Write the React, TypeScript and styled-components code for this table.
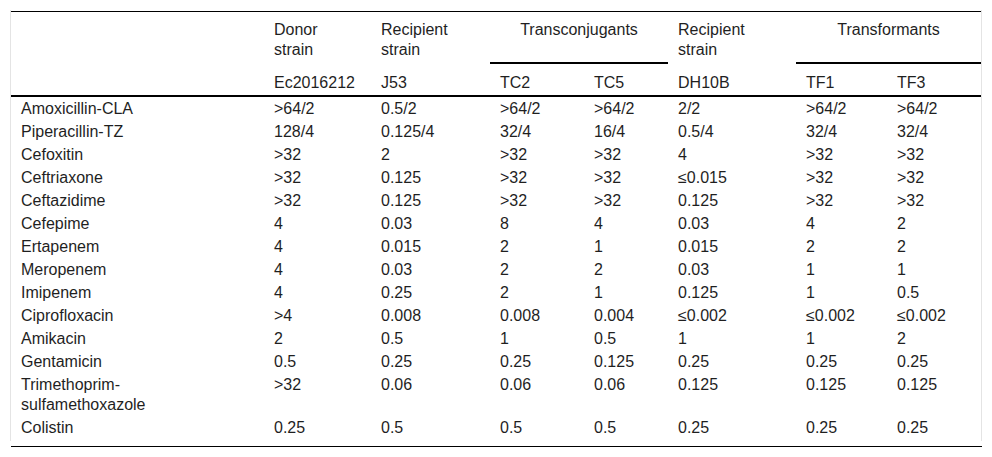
import styled, { createGlobalStyle } from 'styled-components';

const GlobalStyle = createGlobalStyle`
  body {
    margin: 0;
    background: #ffffff;
    color: #1f1f1f;
    font-family: "Liberation Sans", Arial, sans-serif;
    font-size: 16px;
  }
`

interface Row {
  label: string[]
  values: string[]
}

const COLUMNS = [253, 107, 119, 94, 84, 128, 91, 94];

const ROWS: Row[] = [
  { label: ['Amoxicillin-CLA'], values: ['>64/2', '0.5/2', '>64/2', '>64/2', '2/2', '>64/2', '>64/2'] },
  { label: ['Piperacillin-TZ'], values: ['128/4', '0.125/4', '32/4', '16/4', '0.5/4', '32/4', '32/4'] },
  { label: ['Cefoxitin'], values: ['>32', '2', '>32', '>32', '4', '>32', '>32'] },
  { label: ['Ceftriaxone'], values: ['>32', '0.125', '>32', '>32', '≤0.015', '>32', '>32'] },
  { label: ['Ceftazidime'], values: ['>32', '0.125', '>32', '>32', '0.125', '>32', '>32'] },
  { label: ['Cefepime'], values: ['4', '0.03', '8', '4', '0.03', '4', '2'] },
  { label: ['Ertapenem'], values: ['4', '0.015', '2', '1', '0.015', '2', '2'] },
  { label: ['Meropenem'], values: ['4', '0.03', '2', '2', '0.03', '1', '1'] },
  { label: ['Imipenem'], values: ['4', '0.25', '2', '1', '0.125', '1', '0.5'] },
  { label: ['Ciprofloxacin'], values: ['>4', '0.008', '0.008', '0.004', '≤0.002', '≤0.002', '≤0.002'] },
  { label: ['Amikacin'], values: ['2', '0.5', '1', '0.5', '1', '1', '2'] },
  { label: ['Gentamicin'], values: ['0.5', '0.25', '0.25', '0.125', '0.25', '0.25', '0.25'] },
  { label: ['Trimethoprim-', 'sulfamethoxazole'], values: ['>32', '0.06', '0.06', '0.06', '0.125', '0.125', '0.125'] },
  { label: ['Colistin'], values: ['0.25', '0.5', '0.5', '0.5', '0.25', '0.25', '0.25'] },
];

const STRAINS = ['Ec2016212', 'J53', 'TC2', 'TC5', 'DH10B', 'TF1', 'TF3'];

export default function App() {
  return (
    <Page>
      <GlobalStyle />
      <Frame>
        <Table>
          <colgroup>
            {COLUMNS.map((w, i) => <Col key={i} $width={w} />)}
          </colgroup>
          <thead>
            <tr>
              <GroupCell rowSpan={2} $rule />
              <GroupCell>Donor<br />strain</GroupCell>
              <GroupCell>Recipient<br />strain</GroupCell>
              <GroupCell colSpan={2} $center $underline>Transconjugants</GroupCell>
              <GroupCell>Recipient<br />strain</GroupCell>
              <GroupCell colSpan={2} $center $underline>Transformants</GroupCell>
            </tr>
            <tr>
              {STRAINS.map(s => <StrainCell key={s}>{s}</StrainCell>)}
            </tr>
          </thead>
          <tbody>
            {ROWS.map(row => (
              <tr key={row.label.join('')}>
                <DataCell>
                  {row.label.map((part, i) => (
                    <span key={part}>{i > 0 && <br />}{part}</span>
                  ))}
                </DataCell>
                {row.values.map((v, i) => <DataCell key={i}>{v}</DataCell>)}
              </tr>
            ))}
          </tbody>
        </Table>
      </Frame>
      <BottomRule />
    </Page>
  )
}


const Page = styled.div`
  padding: 10px 0 0 10px;
  width: 972px;
`

const Frame = styled.div`
  border-left: 1px solid #e4e4e4;
  border-right: 1px solid #e4e4e4;
  padding: 1px 0 2px;
`

const Table = styled.table`
  width: 970px;
  table-layout: fixed;
  border-collapse: separate;
  border-spacing: 0;
  border-top: 1px solid #000;
  font-size: 16px;
  line-height: 20px;
`

const Col = styled.col<{ $width: number }>`
  width: ${p => p.$width}px;
`

const GroupCell = styled.th<{ $center?: boolean; $underline?: boolean; $rule?: boolean }>`
  padding: 8px 10px 4px;
  font-weight: normal;
  text-align: ${p => (p.$center ? 'center' : 'left')};
  vertical-align: top;
  border-bottom: ${p => (p.$underline || p.$rule ? '2px solid #000' : 'none')};
`

const StrainCell = styled.th`
  padding: 9px 10px 2px;
  font-weight: normal;
  text-align: left;
  vertical-align: top;
  border-bottom: 2px solid #000;
`

const DataCell = styled.td`
  padding: 2px 10px 1px;
  text-align: left;
  vertical-align: top;
`

const BottomRule = styled.div`
  margin: 5px 0 0 1px;
  width: 971px;
  border-top: 1px solid #000;
`
